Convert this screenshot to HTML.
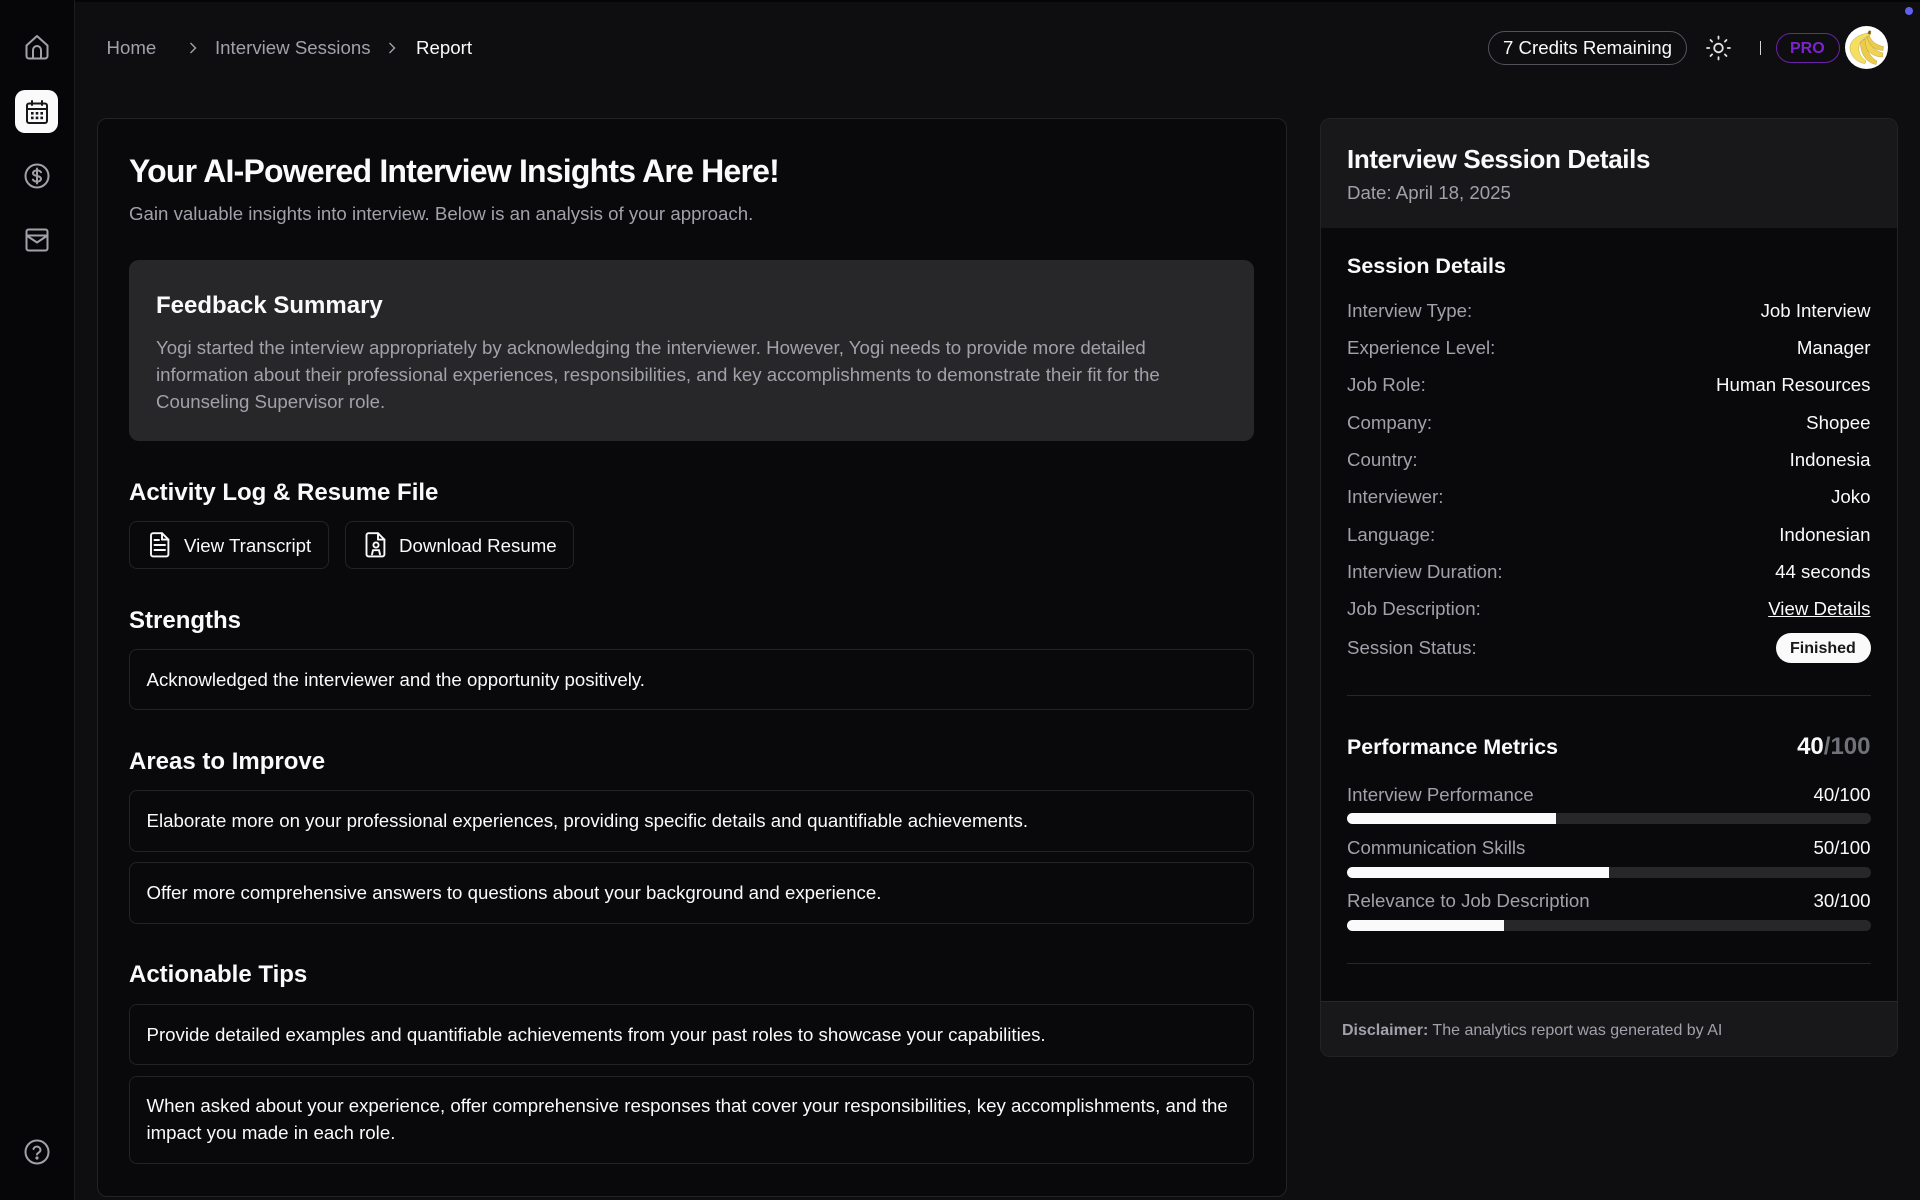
<!DOCTYPE html>
<html lang="en"><head><meta charset="utf-8"><title>Report</title>
<style>
*{box-sizing:border-box}
html,body{margin:0;padding:0;width:1920px;height:1200px;overflow:hidden;background:#0e0e10;font-family:"Liberation Sans",sans-serif;color:#fafafa}
.a{position:absolute}
.t{position:absolute;white-space:nowrap;line-height:30px;margin-top:-15px;font-size:18.67px}
.r{right:49.500px;text-align:right}
.g{color:#a1a1aa}
.b{font-weight:700}
.h{font-size:24px;font-weight:700}
.box{position:absolute;left:129px;width:1125px;border:1px solid #232326;border-radius:8px;background:#09090b}
.btn{position:absolute;top:521px;height:48px;border:1px solid #232326;border-radius:8px;background:#09090b}
.bar{position:absolute;left:1347px;width:523.500px;height:11px;border-radius:6px;background:#27272a;overflow:hidden}
.bar i{display:block;height:100%;background:#fafafa}
svg{position:absolute;overflow:visible}
</style></head><body>
<div class="a" style="left:0;top:0;width:1920px;height:2px;background:#050506"></div>
<div class="a" style="left:0;top:0;width:75px;height:1200px;background:#060608;border-right:1px solid #1c1c1f"></div>

<svg style="left:24px;top:34px" width="26" height="26" viewBox="0 0 26 26" fill="none" stroke="#a1a1aa" stroke-width="2" stroke-linejoin="round" stroke-linecap="round"><path d="M2.500 11.500 L13 2 L23.500 11.500 V22 a2.500 2.500 0 0 1-2.500 2.500 H5 a2.500 2.500 0 0 1-2.500-2.500Z"/><path d="M9 24.500 V16 a4 4 0 0 1 8 0 V24.500"/></svg>

<div class="a" style="left:15px;top:90px;width:43px;height:43px;border-radius:10px;background:#fafafa"></div>
<svg style="left:25px;top:100px" width="24" height="24" viewBox="0 0 24 24" fill="none" stroke="#18181b" stroke-width="2" stroke-linecap="round"><rect x="2" y="3.500" width="20" height="19.500" rx="2"/><path d="M2 9h20M7 1v4M17 1v4"/><g fill="#18181b" stroke="none"><rect x="6" y="12" width="2.600" height="2.600"/><rect x="10.700" y="12" width="2.600" height="2.600"/><rect x="15.400" y="12" width="2.600" height="2.600"/><rect x="6" y="16.600" width="2.600" height="2.600"/><rect x="10.700" y="16.600" width="2.600" height="2.600"/><rect x="15.400" y="16.600" width="2.600" height="2.600"/></g></svg>

<svg style="left:24px;top:163px" width="26" height="26" viewBox="0 0 26 26" fill="none" stroke="#a1a1aa" stroke-width="2" stroke-linecap="round"><circle cx="13" cy="13" r="11.500"/><path d="M17 9.300c-.7-1.200-2.200-1.900-4-1.900-2.300 0-4 1.200-4 2.900 0 1.800 1.700 2.300 4 2.700 2.300.4 4 1 4 2.800 0 1.700-1.700 2.800-4 2.800-1.900 0-3.400-.7-4.100-2M13 5.500v15"/></svg>

<svg style="left:25px;top:228px" width="24" height="24" viewBox="0 0 24 24" fill="none" stroke="#a1a1aa" stroke-width="2" stroke-linejoin="round" stroke-linecap="round"><rect x="1.500" y="1.500" width="21" height="21" rx="2"/><path d="M1.500 7.500h21M1.500 7.500l10.500 7 10.500-7"/></svg>

<svg style="left:24px;top:1139px" width="26" height="26" viewBox="0 0 26 26" fill="none" stroke="#a1a1aa" stroke-width="2" stroke-linecap="round"><circle cx="13" cy="13" r="11.500"/><path d="M9.500 10a3.600 3.600 0 0 1 7 1c0 2.400-3.500 3-3.500 4.500"/><circle cx="13" cy="19" r=".6" fill="#a1a1aa"/></svg>

<div class="t g" style="left:106.500px;top:48px">Home</div>
<svg style="left:186.500px;top:42px" width="12" height="12" viewBox="0 0 12 12" fill="none" stroke="#a1a1aa" stroke-width="1.400"><path d="M3.500 1l5 5-5 5"/></svg>
<div class="t g" style="left:215px;top:48px">Interview Sessions</div>
<svg style="left:386px;top:42px" width="12" height="12" viewBox="0 0 12 12" fill="none" stroke="#a1a1aa" stroke-width="1.400"><path d="M3.500 1l5 5-5 5"/></svg>
<div class="t" style="left:416px;top:48px">Report</div>

<div class="a" style="left:1488px;top:31px;width:199px;height:34px;border:1px solid #52525b;border-radius:17px"></div>
<div class="t" style="left:1503px;top:48px">7 Credits Remaining</div>
<svg style="left:1706px;top:35px" width="26" height="26" viewBox="0 0 26 26" fill="none" stroke="#e4e4e7" stroke-width="1.800" stroke-linecap="round"><circle cx="12.500" cy="13" r="4.300"/><path d="M12.500 1.500v2.300M12.500 22.200v2.300M1 13h2.300M21.700 13h2.300M4.500 5l1.600 1.600M18.900 19.400l1.600 1.600M4.500 21l1.600-1.600M18.900 6.600l1.600-1.600"/></svg>
<div class="a" style="left:1760px;top:41px;width:1px;height:14px;background:#d4d4d8"></div>
<div class="a" style="left:1776px;top:33px;width:64px;height:30px;border:1.500px solid #6b21a8;border-radius:15px"></div>
<div class="t b" style="left:1790px;top:49px;font-size:16px;color:#7e22ce">PRO</div>
<div class="a" style="left:1845px;top:26px;width:43px;height:43px;border-radius:50%;background:#fff"></div>
<svg style="left:1845px;top:26px" width="43" height="43" viewBox="0 0 43 43" stroke="#a88a2a" stroke-width=".35"><path d="M24 9C26 15 31 19 38.500 20.500L38 24.500C30 24 24 20 21 12Z" fill="#edcb4a"/><path d="M22 11C24 19 30 25 38 27L37.500 31C28 31 20 25 18 14Z" fill="#f1d352"/><path d="M20 13C20 22 25 31 32 35L31 38.500C22 37 15 28 15.500 16Z" fill="#edcb4a"/><path d="M24 7C14 8 4 14 5 23C6 31 13 37 20 37.500L21 35C15 31 12 24 15 17C17 13 21 11 25 9Z" fill="#f5de62"/><path d="M22.500 7.500l1.500-3 2 .6-.5 3.400Z" fill="#7a5a1a"/></svg>
<div class="a" style="left:1905px;top:7px;width:8px;height:8px;border-radius:50%;background:#6060ec"></div>

<!-- Main card -->
<div class="a" style="left:97px;top:118px;width:1190px;height:1079px;background:#09090b;border:1px solid #232326;border-radius:10px"></div>
<div class="t b" style="left:129px;top:171px;font-size:32px;letter-spacing:-.8px;line-height:40px;margin-top:-20px">Your AI-Powered Interview Insights Are Here!</div>
<div class="t g" style="left:129px;top:214px">Gain valuable insights into interview. Below is an analysis of your approach.</div>

<div class="a" style="left:129px;top:260px;width:1125px;height:181px;background:#27272a;border-radius:10px"></div>
<div class="t h" style="left:156px;top:306px">Feedback Summary</div>
<div class="a g" style="left:156px;top:333.500px;width:1060px;font-size:18.670px;line-height:27px">Yogi started the interview appropriately by acknowledging the interviewer. However, Yogi needs to provide more detailed information about their professional experiences, responsibilities, and key accomplishments to demonstrate their fit for the Counseling Supervisor role.</div>

<div class="t h" style="left:129px;top:492.500px">Activity Log &amp; Resume File</div>
<div class="btn" style="left:129px;width:200px"></div>
<svg style="left:148px;top:530px" width="24" height="30" viewBox="0 0 24 30" fill="none" stroke="#fafafa" stroke-width="1.900" stroke-linejoin="round" stroke-linecap="round"><path d="M14 3.200H5a2 2 0 0 0-2 2V24.400a2 2 0 0 0 2 2H18.400a2 2 0 0 0 2-2V9.600Z"/><path d="M14 3.200V9.600H20.400M6.500 10H11M6.500 15H17M6.500 20H17"/></svg>
<div class="t" style="left:184px;top:545.500px">View Transcript</div>
<div class="btn" style="left:345px;width:229px"></div>
<svg style="left:364px;top:530px" width="24" height="30" viewBox="0 0 24 30" fill="none" stroke="#fafafa" stroke-width="1.900" stroke-linejoin="round" stroke-linecap="round"><path d="M14 3.200H4.500a2 2 0 0 0-2 2V24.400a2 2 0 0 0 2 2H18.400a2 2 0 0 0 2-2V9.600Z"/><path d="M14 3.200V9.600H20.400"/><circle cx="12" cy="15" r="2.600"/><path d="M8 24.400l1-4.200h6l1 4.200"/></svg>
<div class="t" style="left:399px;top:545.500px">Download Resume</div>

<div class="t h" style="left:129px;top:620.500px">Strengths</div>
<div class="box" style="top:649px;height:61px"></div>
<div class="t" style="left:146.500px;top:679.500px">Acknowledged the interviewer and the opportunity positively.</div>

<div class="t h" style="left:129px;top:761.500px">Areas to Improve</div>
<div class="box" style="top:790px;height:62px"></div>
<div class="t" style="left:146.500px;top:821px">Elaborate more on your professional experiences, providing specific details and quantifiable achievements.</div>
<div class="box" style="top:862px;height:62px"></div>
<div class="t" style="left:146.500px;top:893px">Offer more comprehensive answers to questions about your background and experience.</div>

<div class="t h" style="left:129px;top:974.500px">Actionable Tips</div>
<div class="box" style="top:1004px;height:61px"></div>
<div class="t" style="left:146.500px;top:1034.500px">Provide detailed examples and quantifiable achievements from your past roles to showcase your capabilities.</div>
<div class="box" style="top:1076px;height:88px"></div>
<div class="a" style="left:146.500px;top:1092px;width:1095px;font-size:18.670px;line-height:27px">When asked about your experience, offer comprehensive responses that cover your responsibilities, key accomplishments, and the impact you made in each role.</div>

<!-- Right card -->
<div class="a" style="left:1320px;top:118px;width:578px;height:939px;background:#09090b;border:1px solid #232326;border-radius:10px;overflow:hidden">
  <div class="a" style="left:0;top:0;width:100%;height:109px;background:#18181b"></div>
  <div class="a" style="left:0;bottom:0;width:100%;height:55px;background:#18181b;border-top:1px solid #27272a"></div>
</div>
<div class="t h" style="left:1347px;top:158.500px;font-size:26px;letter-spacing:-.36px">Interview Session Details</div>
<div class="t g" style="left:1347px;top:193px">Date: April 18, 2025</div>
<div class="t b" style="left:1347px;top:265.500px;font-size:21.500px">Session Details</div>

<div class="t g" style="left:1347px;top:310.500px">Interview Type:</div><div class="t r" style="top:310.500px">Job Interview</div>
<div class="t g" style="left:1347px;top:347.500px">Experience Level:</div><div class="t r" style="top:347.500px">Manager</div>
<div class="t g" style="left:1347px;top:385px">Job Role:</div><div class="t r" style="top:385px">Human Resources</div>
<div class="t g" style="left:1347px;top:422.500px">Company:</div><div class="t r" style="top:422.500px">Shopee</div>
<div class="t g" style="left:1347px;top:459.500px">Country:</div><div class="t r" style="top:459.500px">Indonesia</div>
<div class="t g" style="left:1347px;top:497px">Interviewer:</div><div class="t r" style="top:497px">Joko</div>
<div class="t g" style="left:1347px;top:534.500px">Language:</div><div class="t r" style="top:534.500px">Indonesian</div>
<div class="t g" style="left:1347px;top:572px">Interview Duration:</div><div class="t r" style="top:572px">44 seconds</div>
<div class="t g" style="left:1347px;top:609px">Job Description:</div><div class="t r" style="top:609px;text-decoration:underline">View Details</div>
<div class="t g" style="left:1347px;top:647.500px">Session Status:</div>
<div class="a" style="left:1775.500px;top:633px;width:95px;height:30px;border-radius:15px;background:#fafafa"></div>
<div class="t b" style="left:1790px;top:648.500px;font-size:16px;color:#18181b">Finished</div>
<div class="a" style="left:1347px;top:695px;width:523.500px;height:1px;background:#27272a"></div>

<div class="t b" style="left:1347px;top:746.500px;font-size:21.330px">Performance Metrics</div>
<div class="t b r" style="top:747px;font-size:24px">40<span style="color:#71717a">/100</span></div>

<div class="t g" style="left:1347px;top:794.500px">Interview Performance</div><div class="t r" style="top:794.500px">40/100</div>
<div class="bar" style="top:813px"><i style="width:40%"></i></div>
<div class="t g" style="left:1347px;top:847.500px">Communication Skills</div><div class="t r" style="top:847.500px">50/100</div>
<div class="bar" style="top:867px"><i style="width:50%"></i></div>
<div class="t g" style="left:1347px;top:901px">Relevance to Job Description</div><div class="t r" style="top:901px">30/100</div>
<div class="bar" style="top:920px"><i style="width:30%"></i></div>
<div class="a" style="left:1347px;top:963px;width:523.500px;height:1px;background:#27272a"></div>

<div class="t g" style="left:1342px;top:1030.500px;font-size:16px"><b>Disclaimer:</b> The analytics report was generated by AI</div>
</body></html>
